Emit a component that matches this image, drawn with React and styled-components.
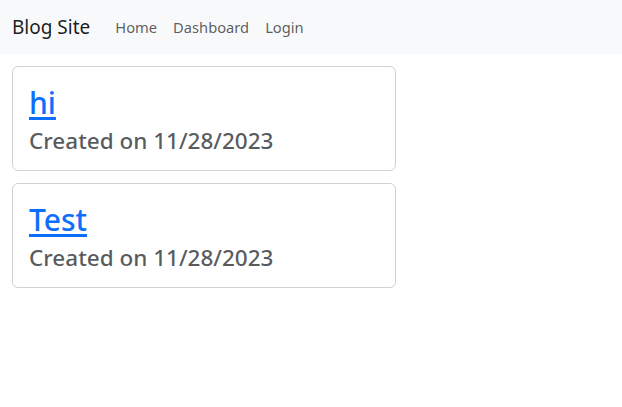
import styled, { createGlobalStyle } from 'styled-components'

const GlobalStyle = createGlobalStyle`
    body{
        margin: 0;
        background: #fff;
        font-family: "Noto Sans", "Open Sans", sans-serif;
        color: #212529;
    }
`

const posts = [
    { id: 1, title: 'hi', created: '11/28/2023' },
    { id: 2, title: 'Test', created: '11/28/2023' },
]

export default function App(){
    return(
        <>
            <GlobalStyle />
            <Navbar>
                <Brand href="#">Blog Site</Brand>
                <NavLinks>
                    <NavLink href="#">Home</NavLink>
                    <NavLink href="#">Dashboard</NavLink>
                    <NavLink href="#">Login</NavLink>
                </NavLinks>
            </Navbar>
            <PostList>
                {posts.map(post => (
                    <Card key={post.id}>
                        <CardTitle><a href="#">{post.title}</a></CardTitle>
                        <CardSubtitle>Created on {post.created}</CardSubtitle>
                    </Card>
                ))}
            </PostList>
        </>
    )
}

const Navbar = styled.nav`
    display: flex;
    align-items: center;
    height: 54px;
    padding: 0 12px;
    background: #f8f9fa;
`

const Brand = styled.a`
    font-size: 19px;
    color: rgba(0, 0, 0, .9);
    text-decoration: none;
    margin-right: 17px;
`

const NavLinks = styled.div`
    display: flex;
`

const NavLink = styled.a`
    font-size: 14.7px;
    padding: 0 8px;
    color: rgba(0, 0, 0, .65);
    text-decoration: none;
`

const PostList = styled.main`
    display: flex;
    flex-direction: column;
    gap: 12px;
    padding: 12px;
    width: 384px;
`

const Card = styled.div`
    height: 105px;
    box-sizing: border-box;
    padding: 16px;
    border: 1px solid rgba(0, 0, 0, .175);
    border-radius: 6px;
`

const CardTitle = styled.h2`
    margin: 0 0 3px;
    font-size: 30px;
    font-weight: 500;
    line-height: 40px;

    a{
        color: #0d6efd;
        text-decoration: underline;
        text-underline-offset: 3px;
    }
`

const CardSubtitle = styled.h4`
    margin: 0;
    font-size: 22.5px;
    font-weight: 500;
    line-height: 29px;
    color: rgba(33, 37, 41, .75);
`
